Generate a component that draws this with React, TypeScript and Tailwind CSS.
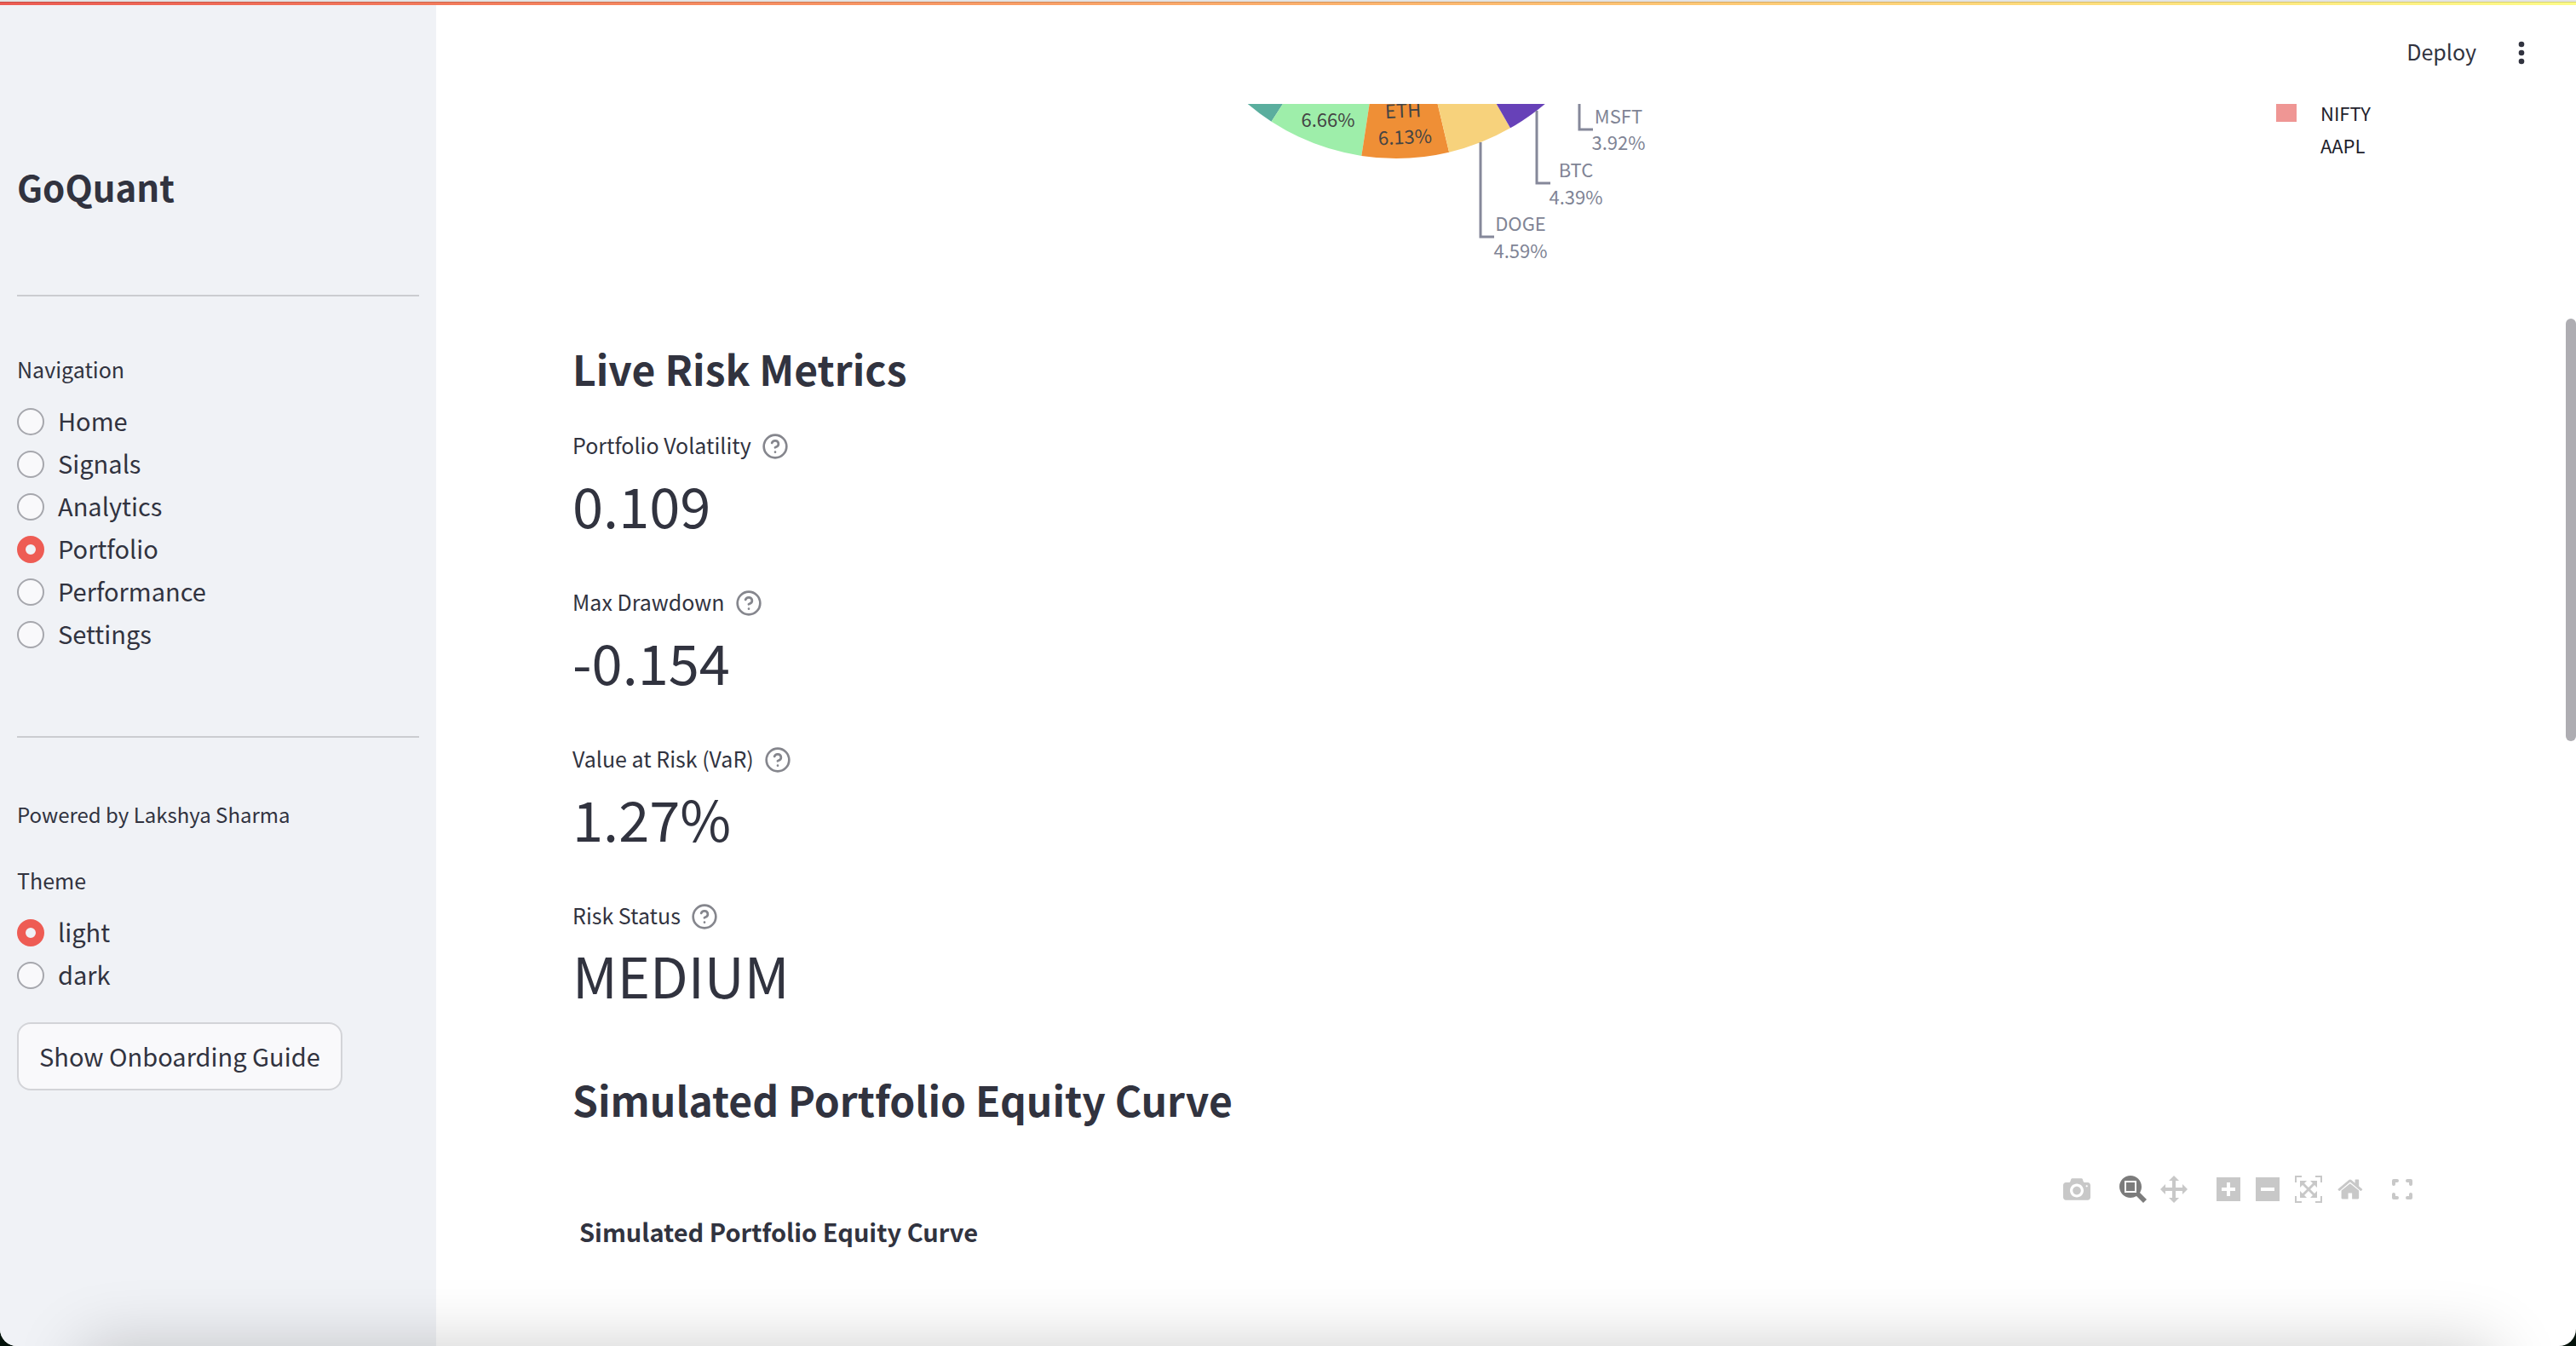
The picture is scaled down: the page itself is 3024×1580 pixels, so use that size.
import { useState } from "react";
import type { ReactNode } from "react";

const pages = ["Home", "Signals", "Analytics", "Portfolio", "Performance", "Settings"];
const themes = ["light", "dark"];

const metrics = [
  { label: "Portfolio Volatility", value: "0.109" },
  { label: "Max Drawdown", value: "-0.154" },
  { label: "Value at Risk (VaR)", value: "1.27%" },
  { label: "Risk Status", value: "MEDIUM" },
];

function RadioGroup({ label, name, options, initial }: { label: string; name: string; options: string[]; initial: string }) {
  const [value, setValue] = useState(initial);
  return (
    <fieldset>
      <legend className="text-[25px] leading-10">{label}</legend>
      <div className="mt-[17px] flex flex-col">
        {options.map((option) => (
          <label key={option} className="flex h-[50px] items-center gap-4 text-[29px] leading-[46px]">
            <input
              type="radio"
              name={name}
              checked={value === option}
              onChange={() => setValue(option)}
              className="size-8 shrink-0 appearance-none rounded-full border-2 border-[#a6a7ad] bg-[#f9f9fb] checked:border-10 checked:border-[#ee5c54] checked:bg-[#f0f2f6]"
            />
            <span className="pb-1">{option}</span>
          </label>
        ))}
      </div>
    </fieldset>
  );
}

function HelpIcon() {
  return (
    <svg viewBox="0 0 24 24" className="size-8" fill="none" stroke="currentColor" strokeWidth="2" strokeLinecap="round" strokeLinejoin="round">
      <circle cx="12" cy="12" r="10" />
      <path d="M9.09 9a3 3 0 0 1 5.83 1c0 2-3 3-3 3" />
      <path d="M12 17h.01" />
    </svg>
  );
}

function AllocationPie() {
  return (
    <svg viewBox="-300 0 600 222" className="h-[222px] w-[600px]" fontSize="22" fontFamily="'Noto Sans CJK SC', sans-serif" textAnchor="middle">
      <path d="M0 -205L-240 -84A269 269 0 0 0 -146.5 20.7Z" fill="#5aae9e" />
      <path d="M0 -205L-146.5 20.7A269 269 0 0 0 -40.7 60.9Z" fill="#9eeeaa" />
      <path d="M0 -205L-40.7 60.9A269 269 0 0 0 62.1 56.7Z" fill="#ef8f36" />
      <path d="M0 -205L62.1 56.7A269 269 0 0 0 134 28.3Z" fill="#f7d27c" />
      <path d="M0 -205L134 28.3A269 269 0 0 0 196 -20Z" fill="#6741b8" />
      <g fill="#444">
        <text x="-80" y="27">6.66%</text>
        <g transform="rotate(-2.5 9 30)">
          <text x="9" y="16">ETH</text>
          <text x="10" y="47">6.13%</text>
        </g>
      </g>
      <g fill="none" stroke="#85889a" strokeWidth="3">
        <path d="M99 45V156H115" />
        <path d="M165 8V93H181" />
        <path d="M215 0V30H231" />
      </g>
      <g fill="#808495">
        <text x="146" y="149">DOGE</text>
        <text x="146" y="181">4.59%</text>
        <text x="211" y="86">BTC</text>
        <text x="211" y="118">4.39%</text>
        <text x="261" y="23">MSFT</text>
        <text x="261" y="54">3.92%</text>
      </g>
    </svg>
  );
}

function ModebarButton({ label, width, d, active }: { label: string; width: number; d: string; active?: boolean }) {
  return (
    <button type="button" aria-label={label} className={active ? "text-[#7c7c7c]" : "text-[#c8c8c8]"}>
      <svg viewBox={`0 0 ${width} 1000`} className="h-8 w-auto" fill="currentColor">
        <path transform="matrix(1 0 0 -1 0 850)" d={d} />
      </svg>
    </button>
  );
}

function ButtonGroup({ children }: { children: ReactNode }) {
  return <div className="flex items-center gap-4">{children}</div>;
}

function Modebar() {
  return (
    <div className="mt-[60px] mr-8 flex h-8 items-center justify-end gap-[34px]">
      <ButtonGroup>
        <ModebarButton
          label="Download plot as a png"
          width={1000}
          d="m500 450c-83 0-150-67-150-150 0-83 67-150 150-150 83 0 150 67 150 150 0 83-67 150-150 150z m400 150h-120c-16 0-34 13-39 29l-31 93c-6 15-23 28-40 28h-340c-16 0-34-13-39-28l-31-94c-6-15-23-28-40-28h-120c-55 0-100-45-100-100v-450c0-55 45-100 100-100h800c55 0 100 45 100 100v450c0 55-45 100-100 100z m-400-550c-138 0-250 112-250 250 0 138 112 250 250 250 138 0 250-112 250-250 0-138-112-250-250-250z m365 380c-19 0-35 16-35 35 0 19 16 35 35 35 19 0 35-16 35-35 0-19-16-35-35-35z"
        />
      </ButtonGroup>
      <ButtonGroup>
        <ModebarButton
          label="Zoom"
          active
          width={1000}
          d="m1000-25l-250 251c40 63 63 138 63 218 0 224-182 406-407 406-224 0-406-182-406-406s183-406 407-406c80 0 155 22 218 62l250-250 125 125z m-812 250l0 438 437 0 0-438-437 0z m62 375l313 0 0-312-313 0 0 312z"
        />
        <ModebarButton
          label="Pan"
          width={1000}
          d="m1000 350l-187 188 0-125-250 0 0 250 125 0-188 187-187-187 125 0 0-250-250 0 0 125-188-188 186-187 0 125 252 0 0-250-125 0 187-188 188 188-125 0 0 250 250 0 0-126 187 188z"
        />
      </ButtonGroup>
      <div className="flex items-center gap-[18px]">
        <ModebarButton
          label="Zoom in"
          width={875}
          d="m1 787l0-875 875 0 0 875-875 0z m687-500l-187 0 0-187-125 0 0 187-188 0 0 125 188 0 0 187 125 0 0-187 187 0 0-125z"
        />
        <ModebarButton label="Zoom out" width={875} d="m0 788l0-876 876 0 0 876-876 0z m688-500l-500 0 0 125 500 0 0-125z" />
        <ModebarButton
          label="Autoscale"
          width={1000}
          d="m250 850l-187 0-63 0 0-62 0-188 63 0 0 188 187 0 0 62z m688 0l-188 0 0-62 188 0 0-188 62 0 0 188 0 62-62 0z m-875-938l0 188-63 0 0-188 0-62 63 0 187 0 0 62-187 0z m875 188l0-188-188 0 0-62 188 0 62 0 0 62 0 188-62 0z m-125 188l-1 0-93-94-156 156 156 156 92-93 2 0 0 250-250 0 0-2 93-92-156-156-156 156 94 92 0 2-250 0 0-250 0 0 93 93 157-156-157-156-93 94 0 0 0-250 250 0 0 0-94 93 156 157 156-157-93-93 0 0 250 0 0 250z"
        />
        <ModebarButton
          label="Reset axes"
          width={929}
          d="m786 296v-267q0-15-11-26t-25-10h-214v214h-143v-214h-214q-15 0-25 10t-11 26v267q0 1 0 2t0 2l321 264 321-264q1-1 1-4z m124 39l-34-41q-5-5-12-6h-2q-7 0-12 3l-386 322-386-322q-7-4-13-4-7 2-12 7l-35 41q-4 5-3 13t6 12l401 334q18 15 42 15t43-15l136-114v109q0 8 5 13t13 5h107q8 0 13-5t5-13v-227l122-102q5-5 6-12t-4-13z"
        />
      </div>
      <button type="button" aria-label="Fullscreen" className="text-[#c8c8c8]">
        <svg viewBox="0 0 24 24" className="size-6" fill="none" stroke="currentColor" strokeWidth="4" strokeLinecap="round" strokeLinejoin="round">
          <path d="M2 6V2H6M18 2H22V6M22 18V22H18M6 22H2V18" />
        </svg>
      </button>
    </div>
  );
}

export default function App() {
  return (
    <div className="h-screen bg-[#03120a]">
      <div className="relative flex h-full flex-col overflow-hidden rounded-b-[20px] bg-white font-['Noto_Sans_CJK_SC',sans-serif] text-[#31333f]">
        <div className="h-[6px] shrink-0 border-t-2 border-[#e4e4e4] bg-linear-to-r from-[#ec5b52] to-[#fdfb87]">
          <div className="h-px bg-black/15" />
        </div>
        <div className="flex min-h-0 flex-1">
          <aside className="w-[512px] shrink-0 bg-[#f0f2f6] px-5 pt-[183px]">
            <h1 className="text-[42px] leading-[60px] font-bold">GoQuant</h1>
            <hr className="mt-[97px] mb-[65px] border-t-2 border-[#cbccd0]" />
            <RadioGroup label="Navigation" name="page" options={pages} initial="Portfolio" />
            <hr className="mt-[94px] mb-[70px] border-t-2 border-[#cbccd0]" />
            <p className="mb-[37px] text-2xl leading-10">Powered by Lakshya Sharma</p>
            <RadioGroup label="Theme" name="theme" options={themes} initial="light" />
            <button type="button" className="mt-[30px] h-20 rounded-2xl border-2 border-[#d3d4d8] bg-[#f9f9fb] px-6 text-[29px]">
              Show Onboarding Guide
            </button>
          </aside>

          <main className="flex min-w-0 flex-1 flex-col overflow-hidden">
            <header className="flex h-[116px] shrink-0 items-center justify-end gap-[46px] pr-[57px] pb-1">
              <button type="button" className="pb-1 text-[25px] leading-10">Deploy</button>
              <button type="button" aria-label="Main menu">
                <svg viewBox="0 0 14 28" className="h-7 w-[14px]" fill="currentColor">
                  <circle cx="7" cy="4" r="3.3" />
                  <circle cx="7" cy="14" r="3.3" />
                  <circle cx="7" cy="24" r="3.3" />
                </svg>
              </button>
            </header>

            <div className="px-40">
              <div className="flex">
                <div className="flex flex-1 justify-center">
                  <AllocationPie />
                </div>
                <ul className="w-[258px] pl-[66px] text-[22px] leading-[38px] text-[#22222c]">
                  <li className="-mt-[9px] flex items-center gap-7">
                    <span className="h-[21px] w-6 bg-[#ef9694]" />
                    NIFTY
                  </li>
                  <li className="pl-[52px]">AAPL</li>
                </ul>
              </div>

              <h2 className="mt-[58px] text-5xl leading-[60px] font-bold">Live Risk Metrics</h2>
              <dl className="mt-10 flex flex-col gap-[54px]">
                {metrics.map((m) => (
                  <div key={m.label} className="flex flex-col gap-[10px]">
                    <dt className="flex h-10 items-center gap-3 text-[25px] leading-10">
                      {m.label}
                      <button type="button" aria-label={`Help for ${m.label}`} className="pt-1 text-[#85868d]">
                        <HelpIcon />
                      </button>
                    </dt>
                    <dd className="text-[65px] leading-[80px]">{m.value}</dd>
                  </div>
                ))}
              </dl>

              <h2 className="mt-[76px] text-5xl leading-[60px] font-bold">Simulated Portfolio Equity Curve</h2>
              <Modebar />
              <h3 className="mt-[13px] pl-2 text-[29px] leading-10 font-bold">Simulated Portfolio Equity Curve</h3>
            </div>
          </main>
        </div>

        <div className="absolute top-[374px] right-0 h-[496px] w-3 rounded-full bg-[#aeadb2]" />
        <div className="pointer-events-none absolute inset-x-24 top-full h-40 shadow-[0_0_80px_rgba(0,0,0,0.2)]" />
      </div>
    </div>
  );
}
